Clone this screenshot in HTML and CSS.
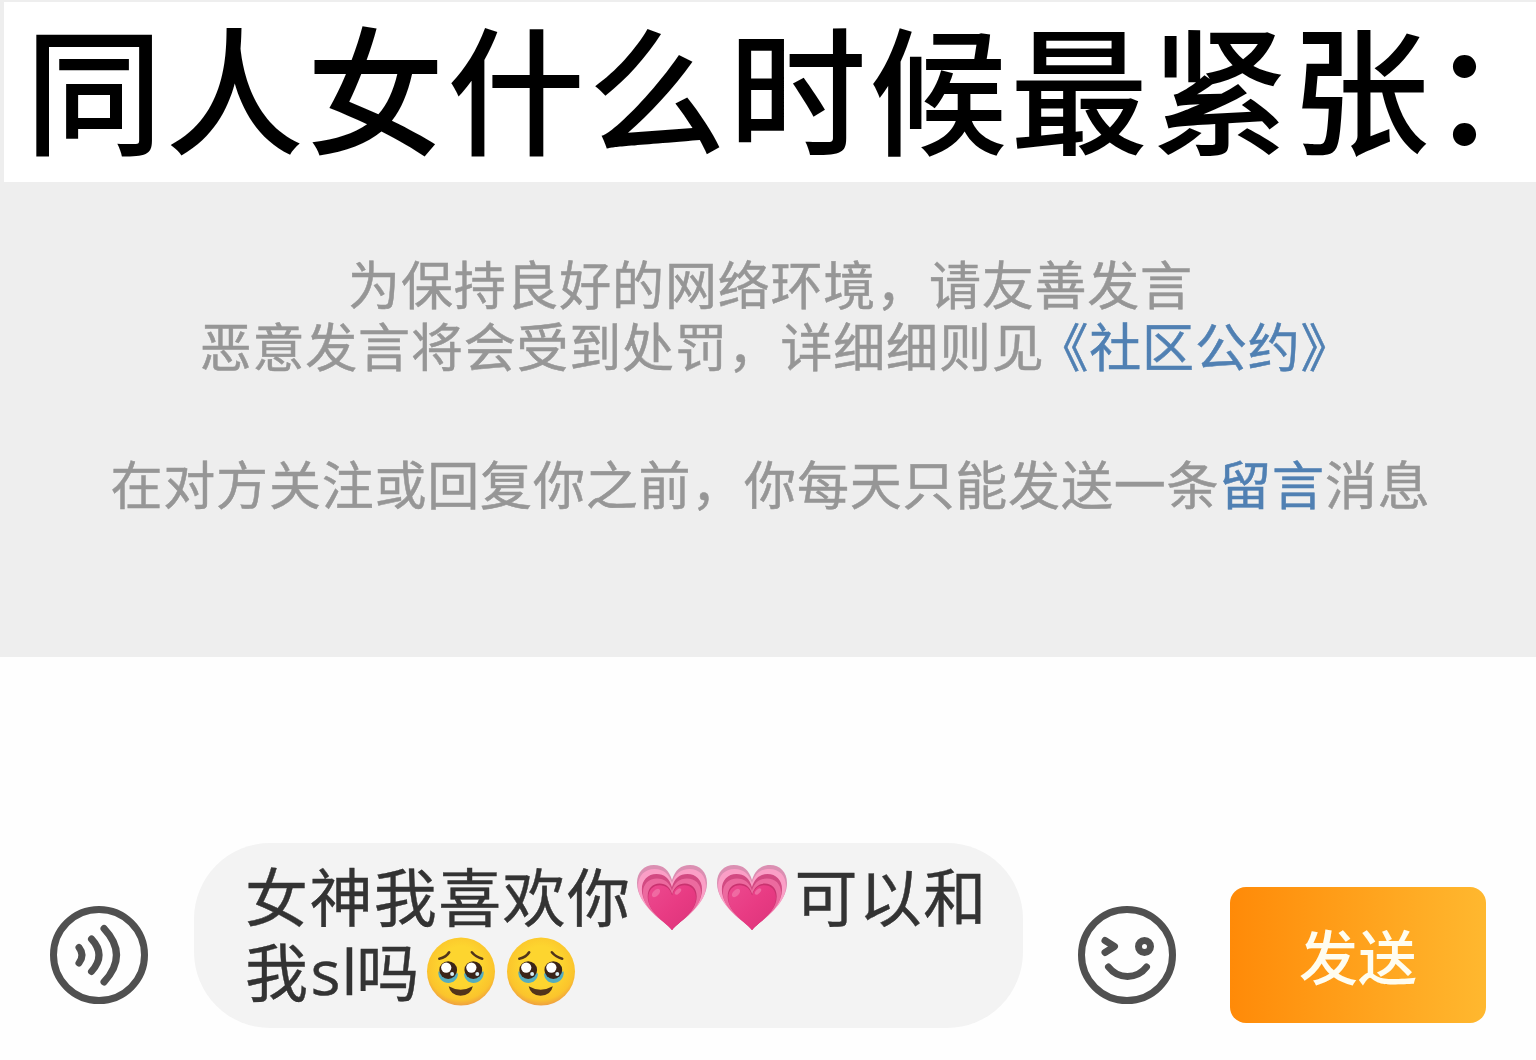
FILE: index.html
```html
<!DOCTYPE html>
<html lang="zh-CN">
<head>
  <meta charset="UTF-8">
  <meta name="viewport" content="width=device-width, initial-scale=1.0">
  <title>同人女什么时候最紧张</title>
  <link rel="stylesheet" href="styles.css">
</head>
<body>
  <svg class="defs" width="0" height="0">
    <defs>
      <radialGradient id="face" cx="50%" cy="42%" r="58%">
        <stop offset="0.5" stop-color="#fdd52f"/>
        <stop offset="0.85" stop-color="#fbc42c"/>
        <stop offset="1" stop-color="#efa040"/>
      </radialGradient>
      <linearGradient id="heart" x1="0" y1="0" x2="1" y2="1">
        <stop offset="0" stop-color="#ec4a8f"/>
        <stop offset="0.5" stop-color="#e83b83"/>
        <stop offset="1" stop-color="#dc337a"/>
      </linearGradient>
      <path id="heartShape" d="M36 67C30 58 1 43 1 20C1 9 8 2 18 2C27 2 33 7 36 17C39 7 45 2 54 2C64 2 71 9 71 20C71 43 42 58 36 67Z"/>
    </defs>
    <symbol id="growHeart" viewBox="0 0 72 68">
      <use href="#heartShape" fill="#db8fb2"/>
      <use href="#heartShape" fill="#fa9fc6" transform="translate(1.1 4) scale(.97 .94)"/>
      <use href="#heartShape" fill="#d24a82" transform="translate(5 9.400) scale(.86 .86)"/>
      <use href="#heartShape" fill="#ec6a9f" transform="translate(6.100 14) scale(.83 .79)"/>
      <use href="#heartShape" fill="#c9326f" transform="translate(11 19.200) scale(.7 .71)"/>
      <use href="#heartShape" fill="url(#heart)" transform="translate(11.600 20.800) scale(.68 .69)"/>
      <ellipse cx="20" cy="30" rx="5" ry="3" fill="#f06aa2" transform="rotate(-45 20 30)"/>
      <ellipse cx="42" cy="28.500" rx="4" ry="2" fill="#f06aa2" transform="rotate(-45 42 28.500)"/>
    </symbol>
    <symbol id="tearFace" viewBox="0 0 70 70">
      <circle cx="35" cy="35" r="34.5" fill="url(#face)"/>
      <path d="M12 35C11 49 31 51 32 37ZM38 37C39 51 59 49 58 35Z" fill="#55adc0"/>
      <circle cx="22" cy="33.500" r="9" fill="#3b2418"/>
      <circle cx="47.500" cy="33.500" r="9" fill="#3b2418"/>
      <circle cx="20" cy="31" r="5.200" fill="#fff"/>
      <circle cx="45.500" cy="31" r="5.200" fill="#fff"/>
      <circle cx="26" cy="37.500" r="2" fill="#d9f0f8"/>
      <circle cx="51.500" cy="37.500" r="2" fill="#d9f0f8"/>
      <path d="M13 22Q20 20.500 23 15.500M46 15.500Q50 20.500 56.500 22" fill="none" stroke="#51341b" stroke-width="2.600" stroke-linecap="round"/>
      <path d="M22.500 50Q34.500 57 47 50Q45 59.500 34.500 59.500Q24.500 59.500 22.500 50Z" fill="#51341b"/>
    </symbol>
  </svg>

  <header class="title">
    <h1>同人女什么时候最紧张<span class="colon">：</span></h1>
  </header>

  <main class="notice">
    <p>为保持良好的网络环境，请友善发言</p>
    <p>恶意发言将会受到处罚，详细细则见<a class="pact">《社区公约》</a></p>
    <p class="limit">在对方关注或回复你之前，你每天只能发送一条<a>留言</a>消息</p>
  </main>

  <footer class="composer">
    <svg class="icon voice" viewBox="0 0 100 100">
      <circle cx="50" cy="50" r="45.500"/>
      <path d="M30 42.500Q36 50 30 58M42.500 34Q57.500 50 42.500 66.500M55 23.500Q80 50 55 77"/>
    </svg>
    <div class="bubble">
      <div class="line">女神我喜欢你<svg class="emoji heart"><use href="#growHeart"/></svg><svg class="emoji heart"><use href="#growHeart"/></svg>可以和</div>
      <div class="line">我<span class="latin">sl</span>吗<svg class="emoji face"><use href="#tearFace"/></svg><svg class="emoji face"><use href="#tearFace"/></svg></div>
    </div>
    <svg class="icon smile" viewBox="0 0 100 100">
      <circle cx="50" cy="50" r="45.500"/>
      <path d="M28 35.500L37.500 41.500L28 47.500M31.500 62C41 74.500 60 74.500 69.500 62"/>
      <circle cx="67.500" cy="41.500" r="6"/>
    </svg>
    <button class="send">发送</button>
  </footer>
</body>
</html>
```
FILE: styles.css
```css
* {
  box-sizing: border-box;
}
body {
  margin: 0;
  height: 1060px;
  padding-top: 2px;
  background: #eee;
  font-family: "Noto Sans CJK SC", sans-serif;
  overflow: hidden;
}
.defs {
  display: block;
}
.title {
  height: 180px;
  margin-left: 4px;
  padding-left: 21px;
  background: #fff;
}
h1 {
  margin: 0;
  font-size: 138px;
  font-weight: 500;
  line-height: 164px;
  letter-spacing: 2.7px;
  white-space: nowrap;
  color: #000;
}
.colon {
  margin-left: -2px;
  letter-spacing: 0;
}
.notice {
  height: 475px;
  padding: 70px 0 0 5px;
  text-align: center;
  color: #969696;
}
.notice p {
  margin: 0;
  font-size: 52px;
  line-height: 62px;
  letter-spacing: 0.8px;
  white-space: nowrap;
  -webkit-text-stroke: 0.5px;
}
.notice .limit {
  margin-top: 76px;
}
.notice a {
  color: #5080b3;
}
.notice .pact {
  margin: 0 -12px 0 -8px;
}
.composer {
  display: flex;
  height: 403px;
  padding: 186px 50px 0 49px;
  background: #fefefe;
}
.icon {
  width: 100px;
  height: 100px;
  margin-top: 62px;
  fill: none;
  stroke: #505050;
  stroke-width: 7;
  stroke-linecap: round;
  stroke-linejoin: round;
}
.bubble {
  width: 829px;
  height: 185px;
  margin: 0 54px 0 45px;
  padding: 13px 0 0 51px;
  border-radius: 76px;
  background: #f3f3f3;
  color: #333;
}
.line {
  display: flex;
  align-items: center;
  height: 75px;
  font-size: 63px;
  letter-spacing: 1.4px;
  line-height: 75px;
  white-space: nowrap;
  -webkit-text-stroke: 0.4px;
}
.latin {
  margin: 4px -2px 0 1px;
  font-family: "Open Sans", sans-serif;
  font-size: 63px;
  letter-spacing: 1px;
}
.emoji {
  width: 72px;
  height: 68px;
  margin: 6px 3px 0 5px;
  -webkit-text-stroke: 0;
}
.heart + .heart {
  margin-right: 6px;
}
.face {
  width: 70px;
  height: 69px;
}
.face + .face {
  margin-left: 7px;
}
.send {
  width: 256px;
  height: 136px;
  margin: 44px 0 0 53px;
  padding: 0 0 2px;
  border: none;
  border-radius: 16px;
  background: linear-gradient(to right, #ff8a08, #ffb82f);
  color: #fffdf0;
  font-family: inherit;
  font-size: 59px;
  font-weight: 500;
}
```
